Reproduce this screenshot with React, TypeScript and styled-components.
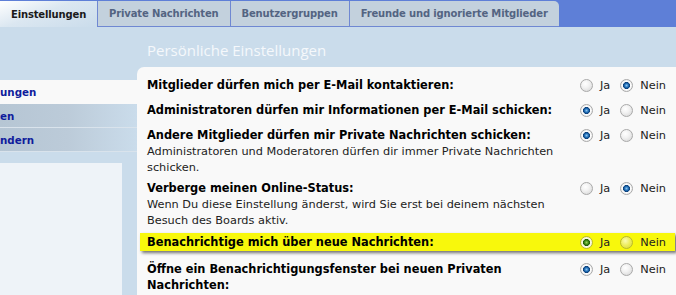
import React from "react";
import styled, { createGlobalStyle } from "styled-components";

const GlobalStyle = createGlobalStyle`
  html, body {
    margin: 0;
    padding: 0;
    background: #cadceb;
  }
  body {
    font-family: "DejaVu Sans", Verdana, sans-serif;
    font-size: 11px;
    color: #000;
  }
`;

type Choice = "ja" | "nein";

interface Setting {
  label: string;
  desc?: string;
  value: Choice;
  highlight?: boolean;
}

const settings: Setting[] = [
  { label: "Mitglieder dürfen mich per E-Mail kontaktieren:", value: "nein" },
  { label: "Administratoren dürfen mir Informationen per E-Mail schicken:", value: "ja" },
  {
    label: "Andere Mitglieder dürfen mir Private Nachrichten schicken:",
    desc: "Administratoren und Moderatoren dürfen dir immer Private Nachrichten schicken.",
    value: "ja",
  },
  {
    label: "Verberge meinen Online-Status:",
    desc: "Wenn Du diese Einstellung änderst, wird Sie erst bei deinem nächsten Besuch des Boards aktiv.",
    value: "nein",
  },
  { label: "Benachrichtige mich über neue Nachrichten:", value: "ja", highlight: true },
  { label: "Öffne ein Benachrichtigungsfenster bei neuen Privaten Nachrichten:", value: "ja" },
];

const tabs = ["Einstellungen", "Private Nachrichten", "Benutzergruppen", "Freunde und ignorierte Mitglieder"];
const menu = ["ungen", "en", "ndern"];

const App = () => {
  return (
    <>
      <GlobalStyle />
      <Page>
        <TabBar>
          {tabs.map((t, i) => (
            <Tab key={t} active={i === 0} last={i === tabs.length - 1}>
              {t}
            </Tab>
          ))}
        </TabBar>

        <Body>
          <Sidebar>
            <Menu>
              {menu.map((m, i) => (
                <MenuItem key={m} active={i === 0}>
                  {m}
                </MenuItem>
              ))}
            </Menu>
            <SideBox />
          </Sidebar>

          <Main>
            <Title>Persönliche Einstellungen</Title>
            <Panel>
              {settings.map((s) => (
                <Row key={s.label} highlight={s.highlight}>
                  <LabelCol>
                    <Label>{s.label}</Label>
                    {s.desc && <Desc>{s.desc}</Desc>}
                  </LabelCol>
                  <Options highlight={s.highlight}>
                    <Radio checked={s.value === "ja"} highlight={s.highlight} />
                    <OptText>Ja</OptText>
                    <Radio checked={s.value === "nein"} highlight={s.highlight} />
                    <OptText>Nein</OptText>
                  </Options>
                </Row>
              ))}
            </Panel>
          </Main>
        </Body>
      </Page>
    </>
  );
};

export default App;

const Page = styled.div`
  width: 676px;
  height: 295px;
  overflow: hidden;
  background: #cadceb;
  display: flex;
  flex-direction: column;
`;

const TabBar = styled.div`
  height: 27px;
  flex: none;
  display: flex;
  align-items: flex-end;
  background: #5e7fd7;
`;

const Tab = styled.div<{ active?: boolean; last?: boolean }>`
  height: 26px;
  box-sizing: border-box;
  display: flex;
  align-items: center;
  padding: 0 11px;
  font-weight: bold;
  font-size: 10px;
  letter-spacing: -0.15px;
  white-space: nowrap;
  color: ${(p) => (p.active ? "#1a1a1a" : "#536482")};
  background: ${(p) =>
    p.active ? "linear-gradient(160deg, #ffffff 0%, #dbe7f1 45%, #cadceb 100%)" : "#c3d1dd"};
  border-right: ${(p) => (p.last ? "none" : "1px solid #6f88d2")};
  border-bottom: ${(p) => (p.active ? "none" : "1px solid #6f88d2")};
  border-top-right-radius: ${(p) => (p.last ? "5px" : "0")};
`;

const Body = styled.div`
  flex: 1;
  display: flex;
  min-height: 0;
`;

const Sidebar = styled.div`
  width: 137px;
  flex: none;
  display: flex;
  flex-direction: column;
  padding-top: 53px;
`;

const Menu = styled.div`
  display: flex;
  flex-direction: column;
`;

const MenuItem = styled.div<{ active?: boolean }>`
  height: 24px;
  box-sizing: border-box;
  display: flex;
  align-items: center;
  font-weight: bold;
  font-size: 10.3px;
  color: #101c9c;
  background: ${(p) => (p.active ? "#f9f9f9" : "linear-gradient(90deg, #b6c6d4 0%, #bccbd9 50%, #cadceb 100%)")};
  border-bottom: ${(p) => (p.active ? "none" : "1px solid #d9e3ec")};
`;

const SideBox = styled.div`
  margin-top: 11px;
  width: 122px;
  flex: 1;
  background: #eef3f8;
`;

const Main = styled.div`
  flex: 1;
  display: flex;
  flex-direction: column;
`;

const Title = styled.div`
  height: 41px;
  box-sizing: border-box;
  padding: 14px 0 0 10px;
  font-family: "Open Sans", "DejaVu Sans", sans-serif;
  font-size: 15px;
  line-height: 18px;
  color: #f5f8fb;
`;

const Panel = styled.div`
  flex: 1;
  background: #f9f9f9;
  border-top-left-radius: 7px;
  padding-top: 8px;
`;

const Row = styled.div<{ highlight?: boolean }>`
  display: flex;
  align-items: flex-start;
  margin: ${(p) => (p.highlight ? "2px 1px 8px 3px" : "0 1px 0 3px")};
  padding: ${(p) => (p.highlight ? "1px 8px 1px 7px" : "2px 8px 2px 7px")};
  background: ${(p) => (p.highlight ? "#f8f80c" : "transparent")};
  box-shadow: ${(p) => (p.highlight ? "2px 2px 3px rgba(0, 0, 0, 0.55)" : "none")};
`;

const LabelCol = styled.div`
  flex: 1;
  padding-right: 14px;
`;

const Label = styled.div`
  font-weight: bold;
  font-size: 11.4px;
  line-height: 16px;
`;

const Desc = styled.div`
  margin-top: 1px;
  color: #222;
  font-size: 11.3px;
  line-height: 16px;
`;

const Options = styled.div<{ highlight?: boolean }>`
  width: 87px;
  flex: none;
  display: flex;
  align-items: center;
  height: 16px;
  padding-bottom: ${(p) => (p.highlight ? "0" : "5px")};
  font-size: 11.3px;
  color: #222;
`;

const Radio = styled.span<{ checked?: boolean; highlight?: boolean }>`
  width: 13px;
  height: 13px;
  box-sizing: border-box;
  border-radius: 50%;
  border: 1px solid ${(p) => (p.highlight ? "#b9b92c" : "#a9a9a9")};
  background: ${(p) => {
    if (p.checked && p.highlight)
      return "radial-gradient(circle at 50% 50%, #9ad35a 0, #3d8a12 2px, #1e5a08 3.2px, #fafae0 3.8px, #e6e6c0 100%)";
    if (p.checked)
      return "radial-gradient(circle at 50% 50%, #8cc4f0 0, #1e6cb4 2px, #0d3f78 3.2px, #ffffff 3.8px, #d8d8d8 100%)";
    if (p.highlight) return "radial-gradient(circle at 40% 35%, #fbfbb0 0, #eeee60 45%, #d6d630 100%)";
    return "radial-gradient(circle at 40% 35%, #ffffff 0, #f2f2f2 40%, #d2d2d2 100%)";
  }};
  flex: none;
`;

const OptText = styled.span`
  margin: 0 10px 0 7px;
  &:last-child {
    margin-right: 0;
  }
`;
